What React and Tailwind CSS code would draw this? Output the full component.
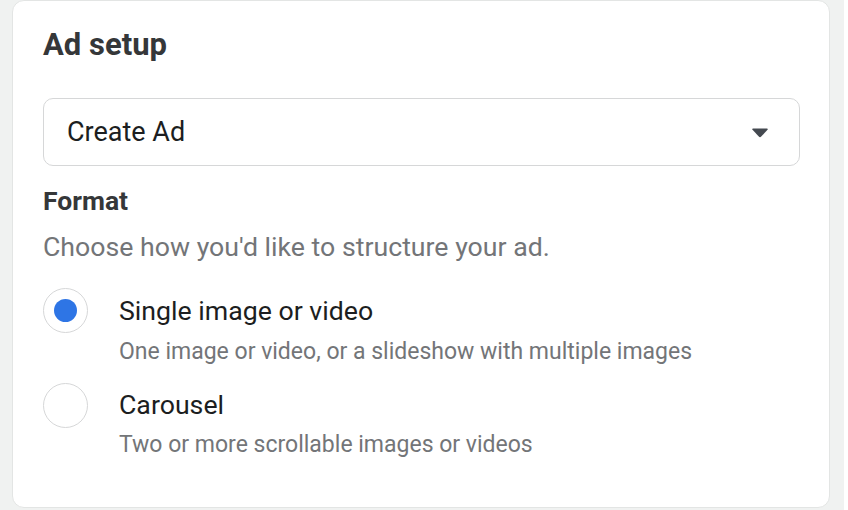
export default function App() {
  const font = { fontFamily: "Roboto, 'Liberation Sans', sans-serif" };
  return (
    <div className="w-[848px] h-[510px] flex bg-[#f0f2f1] overflow-hidden" style={font}>
      <div className="ml-[12px] w-[818px] h-[508px] bg-white border border-[#e3e5e4] rounded-[12px] pt-[26px] pl-[30px] pr-[29px] flex flex-col">
        <div className="text-[31px] leading-[36px] font-bold text-[#353739]">Ad setup</div>
        <div className="mt-[35px] h-[68px] w-[757px] border-[1.5px] border-[#d6d7d8] rounded-[10px] flex items-center justify-between pl-[23px] pr-[30px]">
          <span className="text-[27px] leading-[32px] text-[#1c1e21]">Create Ad</span>
          <svg width="18" height="11" viewBox="0 0 18 11">
            <path d="M2 1.5 H16 Q17.5 1.5 16.5 2.7 L10.2 9.6 Q9 10.8 7.8 9.6 L1.5 2.7 Q0.5 1.5 2 1.5 Z" fill="#444950" />
          </svg>
        </div>
        <div className="mt-[20px] text-[26.5px] leading-[30px] font-bold text-[#353739]">Format</div>
        <div className="mt-[16px] text-[26.7px] leading-[30px] text-[#737578]">Choose how you'd like to structure your ad.</div>
        <div className="mt-[26px] flex items-start">
          <div className="w-[45px] h-[45px] rounded-full border-[1.5px] border-[#d6d7d8] flex items-center justify-center shrink-0">
            <div className="w-[23px] h-[23px] rounded-full bg-[#2e75e5]" />
          </div>
          <div className="ml-[31px] pt-[8px] flex flex-col">
            <div className="text-[26.7px] leading-[30px] text-[#1c1e21]">Single image or video</div>
            <div className="mt-[13px] text-[23px] leading-[26px] text-[#737578]">One image or video, or a slideshow with multiple images</div>
          </div>
        </div>
        <div className="mt-[18px] flex items-start">
          <div className="w-[45px] h-[45px] rounded-full border-[1.5px] border-[#d6d7d8] shrink-0" />
          <div className="ml-[31px] pt-[7px] flex flex-col">
            <div className="text-[26.7px] leading-[30px] text-[#1c1e21]">Carousel</div>
            <div className="mt-[12px] text-[23px] leading-[26px] text-[#737578]">Two or more scrollable images or videos</div>
          </div>
        </div>
      </div>
      <div className="ml-auto w-[4px] h-full bg-white" />
    </div>
  );
}
